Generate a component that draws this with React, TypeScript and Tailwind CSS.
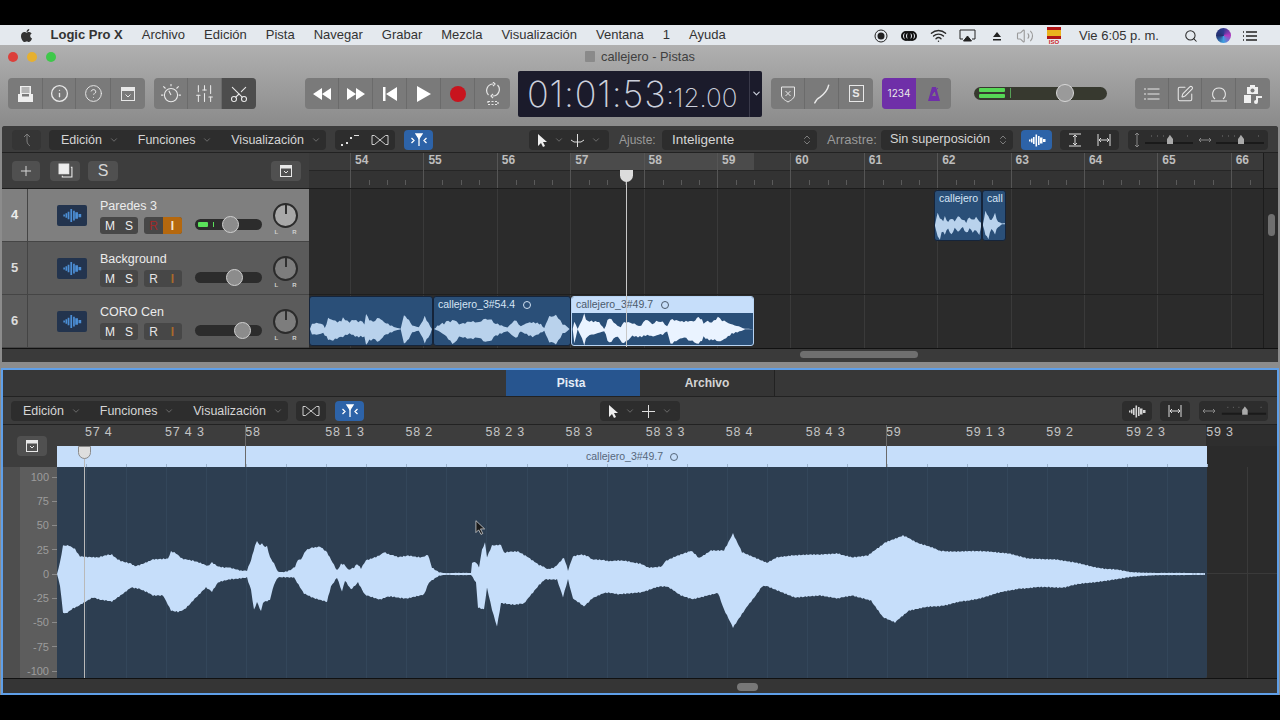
import { ChevronDown, ChevronsUpDown, CircleHelp, Info, Plus, Scissors, Search, SlidersVertical, SquarePen, Volume2, Wifi } from "lucide-react"
import { FaApple } from "react-icons/fa"
import type { ReactNode } from "react"

const sans = "font-['Liberation_Sans',Arial,sans-serif]"

const menus = ["Archivo", "Edición", "Pista", "Navegar", "Grabar", "Mezcla", "Visualización", "Ventana", "1", "Ayuda"]
const bars = [54, 55, 56, 57, 58, 59, 60, 61, 62, 63, 64, 65, 66]
const beats = ["57 4", "57 4 3", "58", "58 1 3", "58 2", "58 2 3", "58 3", "58 3 3", "58 4", "58 4 3", "59", "59 1 3", "59 2", "59 2 3"]
const amps = ["100", "75", "50", "25", "0", "-25", "-50", "-75", "-100"]
const divisions = Array.from({ length: 29 }, (_, i) => i)

// Envelope of the big waveform, traced in page coordinates.
const waveTop = [[57,574],[60,563],[63,546],[65,545],[69,546],[75,549],[80,556],[86,557],[98,558],[108,555],[112,554],[116,558],[124,562],[131,563],[135,566],[141,564],[153,559],[168,559],[171,552],[176,553],[182,558],[196,562],[208,566],[212,563],[218,567],[229,567],[241,571],[247,571],[251,560],[255,545],[257,541],[260,546],[262,543],[264,546],[267,546],[270,557],[274,563],[278,572],[284,572],[292,569],[295,567],[298,560],[301,560],[306,550],[312,547],[320,547],[327,552],[331,559],[337,570],[341,564],[344,564],[349,570],[354,568],[357,564],[361,569],[366,560],[376,557],[384,552],[390,555],[398,557],[408,556],[420,557],[428,555],[432,567],[439,572],[445,573],[471,573],[472,563],[476,562],[479,567],[482,550],[485,543],[487,557],[492,545],[501,545],[504,553],[518,551],[527,556],[539,565],[547,569],[555,567],[564,558],[568,570],[573,557],[580,555],[588,556],[592,560],[604,560],[612,561],[629,561],[640,564],[648,567],[662,567],[665,562],[675,557],[691,551],[699,558],[711,550],[724,550],[733,533],[742,552],[767,563],[777,557],[793,555],[820,555],[838,553],[852,558],[868,556],[885,542],[903,536],[917,542],[940,551],[967,551],[1009,553],[1028,558],[1056,559],[1089,566],[1130,572],[1160,573],[1205,573]]
const waveBottom = [[57,574],[60,585],[63,612],[66,613],[73,608],[84,603],[93,598],[100,600],[112,602],[122,595],[131,588],[139,588],[153,596],[163,596],[171,610],[178,612],[186,608],[196,597],[206,587],[212,591],[218,582],[235,579],[247,577],[251,590],[254,610],[257,602],[261,612],[263,602],[270,600],[274,585],[278,577],[294,577],[300,587],[304,593],[314,598],[327,602],[331,587],[337,578],[342,591],[345,580],[351,589],[358,582],[365,595],[380,599],[388,597],[408,598],[424,594],[429,583],[439,576],[445,575],[471,575],[476,583],[478,607],[484,609],[487,588],[492,610],[497,626],[501,603],[514,605],[524,604],[539,585],[545,579],[557,579],[563,597],[568,580],[573,598],[584,607],[592,598],[604,593],[618,594],[640,592],[660,587],[667,587],[681,595],[693,599],[718,593],[724,610],[733,628],[748,605],[762,587],[767,586],[795,597],[820,595],[838,599],[852,595],[871,600],[883,617],[895,623],[909,610],[938,606],[967,601],[1020,588],[1064,587],[1093,582],[1130,577],[1160,575],[1205,575]]

const r1Top = [[30,433],[36,412],[50,415],[70,420],[75,430],[85,400],[100,405],[120,410],[130,400],[150,410],[170,405],[195,415],[200,388],[215,410],[240,400],[255,410],[290,428],[305,432],[315,390],[325,400],[340,420],[360,428],[378,392],[395,425],[400,433]]
const r1Bottom = [[30,433],[36,455],[50,450],[70,445],[85,465],[100,470],[130,455],[150,450],[195,460],[200,480],[215,465],[240,470],[255,455],[290,438],[305,434],[315,478],[325,470],[340,445],[360,438],[378,478],[395,450],[400,433]]
const r2Top = [[405,433],[420,420],[435,415],[460,405],[480,415],[540,410],[565,400],[590,415],[625,428],[645,405],[665,425],[680,415],[720,415],[735,430],[750,392],[770,392],[790,415],[810,432]]
const r2Bottom = [[405,433],[430,445],[460,480],[480,460],[540,462],[565,475],[590,455],[625,440],[650,462],[665,440],[700,455],[735,438],[750,475],[770,478],[790,450],[810,434]]
const r3Top = [[820,433],[825,410],[835,433],[855,388],[865,410],[900,412],[915,433],[930,398],[950,420],[965,428],[975,410],[1000,415],[1020,425],[1040,405],[1060,415],[1085,408],[1105,425],[1115,405],[1150,412],[1185,410],[1200,395],[1215,412],[1240,410],[1258,398],[1290,415],[1340,432],[1362,433]]
const r3Bottom = [[820,433],[825,478],[835,434],[855,480],[865,455],[915,440],[930,478],[950,455],[975,478],[1000,455],[1040,455],[1085,452],[1105,440],[1115,478],[1150,458],[1200,480],[1215,460],[1260,472],[1300,450],[1340,434],[1362,434]]
const s1Top = [[30,118],[38,85],[45,100],[55,105],[60,95],[70,110],[80,98],[90,108],[100,92],[110,100],[125,110],[135,95],[145,105],[155,95],[165,108],[170,112]]
const s1Bottom = [[30,122],[38,150],[45,163],[50,140],[60,145],[70,130],[80,150],[90,128],[100,140],[115,125],[125,145],[135,130],[145,140],[155,135],[165,150],[170,125]]
const s2Top = [[172,115],[180,75],[190,95],[200,105],[212,85],[222,110],[235,114],[245,114]]
const s2Bottom = [[172,122],[180,150],[190,160],[200,130],[212,145],[222,125],[235,117],[245,117]]

// Adds a little fixed jitter so the edges look like audio, not a smooth outline.
function rough(pts: number[][], center: number, amp: number, step: number) {
  const out: number[][] = []
  for (let i = 0; i < pts.length - 1; i++) {
    const [x0, y0] = pts[i]
    const [x1, y1] = pts[i + 1]
    const n = Math.max(1, Math.round((x1 - x0) / step))
    for (let k = 0; k < n; k++) {
      const x = x0 + ((x1 - x0) * k) / n
      const y = y0 + ((y1 - y0) * k) / n
      const noise = Math.sin(x * 1.7) * 0.6 + Math.sin(x * 4.3 + 1) * 0.6
      const fade = Math.min(1, Math.abs(y - center) / (amp * 4))
      out.push([x, y + (y < center ? -1 : 1) * noise * amp * fade])
    }
  }
  out.push(pts[pts.length - 1])
  return out
}

function envelope(top: number[][], bottom: number[][], center: number, amp: number, step: number) {
  const pts = [...rough(top, center, amp, step), ...rough(bottom, center, amp, step).reverse()]
  return "M" + pts.map((p) => p[0].toFixed(1) + " " + p[1].toFixed(1)).join("L") + "Z"
}

function Seg({ children, className = "" }: { children: ReactNode; className?: string }) {
  return <div className={`flex h-[31px] items-stretch overflow-hidden rounded-[4px] bg-[#7a7a7a] ${className}`}>{children}</div>
}

function SegBtn({ children, className = "" }: { children: ReactNode; className?: string }) {
  return <div className={`flex items-center justify-center border-r border-[#6b6b6b] last:border-r-0 text-[#e8e8e8] ${className}`}>{children}</div>
}

function Dark({ children, className = "" }: { children: ReactNode; className?: string }) {
  return <div className={`flex h-[20px] items-center rounded-[4px] bg-[#2d2d2d] text-[#d5d5d5] ${className}`}>{children}</div>
}

function Chev() {
  return <ChevronDown size={10} strokeWidth={1.5} className="text-[#8f8f8f]" />
}

function MenuGroup({ w = "w-[277px]" }: { w?: string }) {
  return (
    <Dark className={`${w} justify-between pl-[12px] pr-[5px] text-[12.500px]`}>
      <span className="flex items-center gap-[7px]">Edición <Chev /></span>
      <span className="flex items-center gap-[7px]">Funciones <Chev /></span>
      <span className="flex items-center gap-[7px]">Visualización <Chev /></span>
    </Dark>
  )
}

function BowTie() {
  return (
    <svg width="20" height="14" viewBox="0 0 20 14" fill="none" stroke="#cfcfcf" strokeWidth="1">
      <path d="M2 2.500h2.500l11 9h2.500v-9h-2.500l-11 9h-2.500z" />
    </svg>
  )
}

function Snap() {
  return (
    <svg width="18" height="14" viewBox="0 0 18 14" fill="none" stroke="#fff" strokeWidth="1.300">
      <path d="M1.500 5l2.500 2.500l-2.500 2.500M16.500 5l-2.500 2.500l2.500 2.500M9 5v8" />
      <path d="M6 1h6l-3 4.500z" fill="#fff" />
    </svg>
  )
}

function WaveGlyph({ color = "#fff", w = 18 }: { color?: string; w?: number }) {
  return (
    <svg width={w} height="13" viewBox="0 0 18 12" fill={color}>
      <path d="M1 5h1.500v2h-1.500zM3 4h1.500v4h-1.500zM5 2.500h1.600v7h-1.600zM7.500 0h1.600v12h-1.600zM10 1.500h1.600v9h-1.600zM12 3h2.500v6h-2.500zM15 4.500h2.500v3h-2.500z" />
    </svg>
  )
}

function MiniSlider({ w = 52 }: { w?: number }) {
  return (
    <svg width={w} height="18" viewBox="0 0 52 18" fill="none">
      <path d="M2 12h48" stroke="#1a1a1a" strokeWidth="2" />
      <path d="M8 5h1M14 5h1M20 5h1M26 5h1M44 5h1" stroke="#777" />
      <path d="M24 13v-5l3-4l3 4v5z" fill="#aaa" />
    </svg>
  )
}

function CellLines({ cls, lead }: { cls: string; lead: string }) {
  return (
    <div className="absolute inset-0 flex">
      <div className={`h-full shrink-0 ${lead}`} />
      {bars.map((b) => (
        <div key={b} className={`h-full w-[73.4px] shrink-0 border-l ${cls}`} />
      ))}
    </div>
  )
}

function RulerCell({ bar }: { bar: number }) {
  return (
    <div className="flex h-full w-[73.4px] shrink-0 flex-col border-l border-[#555]">
      <div className="h-[17px] pl-[4px] text-[12px] font-bold leading-[15px] text-[#bdbdbd]">{bar}</div>
      <div className="flex flex-1 items-end pb-[3px]">
        <div className="h-[3px] w-1/4" />
        <div className="h-[5px] w-1/4 border-l border-[#5a5a5a]" />
        <div className="h-[5px] w-1/4 border-l border-[#5a5a5a]" />
        <div className="h-[5px] w-1/4 border-l border-[#5a5a5a]" />
      </div>
    </div>
  )
}

function TrackRow({ num, name, selected, fader, armed, meter }: { num: number; name: string; selected?: boolean; fader: string; armed?: boolean; meter?: boolean }) {
  const bg = selected ? "bg-[#7f7f7f]" : "bg-[#5b5b5b]"
  return (
    <div className={`flex h-[53px] border-b border-[#454545] ${bg}`}>
      <div className={`flex w-[26px] items-center justify-center border-r border-[#444] text-[13px] font-bold ${selected ? "text-[#ededed]" : "text-[#dcdcdc]"}`}>{num}</div>
      <div className="ml-[29px] mt-[16px] flex h-[21px] w-[30px] items-center justify-center rounded-[2px] bg-[#23344e]">
        <WaveGlyph color="#4c8fd6" w={22} />
      </div>
      <div className="ml-[13px] flex w-[86px] flex-col pt-[10px]">
        <div className="h-[14px] text-[12.500px] leading-[14px] text-[#ececec]">{name}</div>
        <div className="mt-[4px] flex gap-[6px]">
          <div className="flex h-[17px] w-[38px] items-center justify-around rounded-[3px] bg-[#474747] text-[12px] text-[#efefef]">
            <span>M</span><span>S</span>
          </div>
          <div className="flex h-[17px] w-[38px] items-stretch overflow-hidden rounded-[3px] bg-[#474747] text-[12px]">
            <span className={`flex w-1/2 items-center justify-center ${armed ? "text-[#a02a2a]" : "text-[#e4e4e4]"}`}>R</span>
            <span className={`flex w-1/2 items-center justify-center font-bold ${armed ? "bg-[#b5680e] text-[#f4e6d0]" : "text-[#a86a2c]"}`}>I</span>
          </div>
        </div>
      </div>
      <div className="relative ml-[9px] mt-[30px] h-[11px] w-[67px] rounded-full bg-[#2c2c2c]">
        {meter && <div className="absolute left-[3px] top-[3px] h-[5px] w-[10px] rounded-[1px] bg-[#5ae25a]" />}
        {meter && <div className="absolute left-[18px] top-[3px] h-[5px] w-[1px] bg-[#5ae25a]" />}
        <div className={`absolute -top-[3px] h-[17px] w-[17px] rounded-full border border-[#d0d0d0] bg-[#8c8c8c] ${fader}`} />
      </div>
      <div className="ml-[11px] mt-[14px] flex flex-col items-center">
        <div className={`relative h-[25px] w-[25px] rounded-full border-[2px] border-[#2b2b2b] ${selected ? "bg-[#a8a8a8]" : "bg-[#7d7d7d]"}`}>
          <div className="absolute left-[9.500px] top-0 h-[9px] w-[2px] bg-[#303030]" />
        </div>
        <div className="flex w-[22px] justify-between text-[6px] font-bold leading-[8px] text-[#d0d0d0]"><span>L</span><span>R</span></div>
      </div>
    </div>
  )
}

function Clip({ left, width, name, wave, view, selected, tag, bottom = "bottom-[2px]", top = "top-[1px]" }: { left: string; width: string; name: string; wave: string; view: string; selected?: boolean; tag?: boolean; bottom?: string; top?: string }) {
  return (
    <div className={`absolute ${top} ${bottom} overflow-hidden rounded-[3px] border bg-[#2a4f78] ${left} ${width} ${selected ? "border-[#b7d3f2]" : "border-[#15243a]"}`}>
      <svg className="absolute inset-0 h-full w-full" viewBox={view} preserveAspectRatio="none">
        <path d={wave} fill={selected ? "#eaf3ff" : "#b9d2ec"} />
      </svg>
      {name && (
        <div className={`absolute inset-x-0 top-0 flex h-[16px] items-center gap-[8px] pl-[4px] text-[10.500px] font-medium ${selected ? "bg-[#c6defa] text-[#4a5a6c]" : "text-[#d6e5f5]"}`}>
          <span>{name}</span>
          {tag && <span className={`h-[8px] w-[8px] rounded-full border ${selected ? "border-[#4a5a6c]" : "border-[#cfe0f2]"}`} />}
        </div>
      )}
    </div>
  )
}

function StatusIcons() {
  return (
    <div className="flex items-center text-[#2a2a2a]">
      <svg width="14" height="14" viewBox="0 0 14 14" className="ml-[874px]"><circle cx="7" cy="7" r="6" fill="none" stroke="#222" /><circle cx="7" cy="7" r="3.500" fill="#222" /></svg>
      <svg width="18" height="14" viewBox="0 0 18 14" className="ml-[12px]" fill="none" stroke="#111" strokeWidth="2"><circle cx="6" cy="7" r="4" /><circle cx="9" cy="7" r="4" /><circle cx="12" cy="7" r="4" /></svg>
      <Wifi size={17} strokeWidth={2} className="ml-[12px]" />
      <svg width="17" height="14" viewBox="0 0 17 14" className="ml-[12px]" fill="none" stroke="#222"><path d="M4 10h-3v-9h15v9h-3" /><path d="M8.500 7l4 5h-8z" fill="#222" /></svg>
      <svg width="10" height="10" viewBox="0 0 10 10" className="ml-[16px]"><path d="M5 1l4 5h-8zM1 8h8v1.500h-8z" fill="#222" /></svg>
      <Volume2 size={18} strokeWidth={1.500} className="ml-[14px] text-[#9a9a9a]" />
      <div className="ml-[13px] flex h-[18px] w-[14px] flex-col">
        <div className="h-[3px] bg-[#b01515]" />
        <div className="h-[6px] bg-[#e9b21d]" />
        <div className="h-[3px] bg-[#b01515]" />
        <div className="text-center text-[6px] font-bold leading-[6px] text-[#c22]">ISO</div>
      </div>
      <span className="ml-[18px] w-[85px] whitespace-nowrap text-[13px] text-[#333]">Vie 6:05 p. m.</span>
      <Search size={14} strokeWidth={1.800} className="ml-[20px]" />
      <div className="ml-[18px] h-[15px] w-[15px] rounded-full bg-[conic-gradient(#2f3a8f,#b23ac0,#3fa0e0,#23306f,#2f3a8f)]" />
      <svg width="16" height="12" viewBox="0 0 16 12" className="ml-[11px]" stroke="#222" strokeWidth="1.400"><path d="M4 2h11M4 6h11M4 10h11M1 2h1M1 6h1M1 10h1" /></svg>
    </div>
  )
}

export default function App() {
  return (
    <div className={`relative flex h-[720px] w-[1280px] flex-col overflow-hidden bg-black ${sans}`}>
      <div className="h-[25px] shrink-0 bg-black" />

      {/* Menu bar */}
      <div className="relative flex h-[20px] shrink-0 items-center gap-[19px] bg-[#e4e9ee] pl-[19px] text-[13px] text-[#333]">
        <FaApple size={15} className="-mr-[2.500px] text-[#333]" />
        <span className="font-bold">Logic Pro X</span>
        {menus.map((m) => (
          <span key={m}>{m}</span>
        ))}
        <div className="absolute left-0 top-[1px]"><StatusIcons /></div>
      </div>

      {/* Main window chrome */}
      <div className="flex h-[650px] shrink-0 flex-col bg-[linear-gradient(#b0b0b0,#8c8c8c_12%)]">
        <div className="relative flex h-[23px] shrink-0 items-center justify-center text-[12.800px] text-[#3f3f3f]">
          <div className="absolute left-[8px] top-[7px] flex gap-[9px]">
            <div className="h-[10px] w-[10px] rounded-full bg-[#dc3f3a]" />
            <div className="h-[10px] w-[10px] rounded-full bg-[#e6b030]" />
            <div className="h-[10px] w-[10px] rounded-full bg-[#3ec84a]" />
          </div>
          <div className="mr-[6px] h-[11px] w-[10px] rounded-[1px] bg-[#8a8a8a]" />
          callejero - Pistas
        </div>

        {/* Toolbar */}
        <div className="flex h-[58px] shrink-0 items-center pb-[7px]">
          <Seg className="ml-[8px] w-[137px]">
            <SegBtn className="w-[35px]">
              <svg width="17" height="18" viewBox="0 0 17 18" fill="#eee"><path d="M3 1h11v8h-11zM1 9h4v2.500h7v-2.500h4v8h-15z" /><path d="M4.500 3h8M4.500 5h8M4.500 7h8" stroke="#7a7a7a" /></svg>
            </SegBtn>
            <SegBtn className="w-[33px]"><Info size={19} strokeWidth={1.700} /></SegBtn>
            <SegBtn className="w-[35px]"><CircleHelp size={19} strokeWidth={1.200} /></SegBtn>
            <SegBtn className="flex-1">
              <svg width="16" height="16" viewBox="0 0 16 16" fill="none" stroke="#e8e8e8"><rect x="1.500" y="1.500" width="13" height="13" /><rect x="1.500" y="1.500" width="13" height="3" fill="#e8e8e8" /><path d="M5.500 8.500l2.500 2.500l2.500-2.500" /></svg>
            </SegBtn>
          </Seg>
          <Seg className="ml-[9px] w-[102px]">
            <SegBtn className="w-[34px]">
              <svg width="22" height="22" viewBox="0 0 20 20" fill="none" stroke="#e8e8e8"><circle cx="10" cy="11" r="6" /><path d="M10 11l-2-4M10 1v2M3 3l2 2M17 3l-2 2M1 11h2M17 11h2" /></svg>
            </SegBtn>
            <SegBtn className="w-[34px]"><SlidersVertical size={21} strokeWidth={1.200} /></SegBtn>
            <SegBtn className="flex-1 bg-[#4d4d4d]"><Scissors size={20} strokeWidth={1.300} className="-rotate-90" /></SegBtn>
          </Seg>
          <Seg className="ml-[49px] w-[205px]">
            <SegBtn className="w-[34px]"><svg width="20" height="12" viewBox="0 0 20 12" fill="#fff"><path d="M10 0v12l-9-6zM19 0v12l-9-6z" /></svg></SegBtn>
            <SegBtn className="w-[34px]"><svg width="20" height="12" viewBox="0 0 20 12" fill="#fff"><path d="M1 0v12l9-6zM10 0v12l9-6z" /></svg></SegBtn>
            <SegBtn className="w-[34px]"><svg width="16" height="14" viewBox="0 0 16 14" fill="#fff"><path d="M1 0h2.500v14h-2.500zM15 0v14l-11-7z" /></svg></SegBtn>
            <SegBtn className="w-[34px]"><svg width="14" height="16" viewBox="0 0 14 16" fill="#fff"><path d="M0 0v16l14-8z" /></svg></SegBtn>
            <SegBtn className="w-[34px]"><div className="h-[16px] w-[16px] rounded-full bg-[#c8141e]" /></SegBtn>
            <SegBtn className="flex-1">
              <svg width="18" height="24" viewBox="0 0 18 24" fill="none" stroke="#e6e6e6" strokeWidth="1.200"><path d="M9 2a6.500 6.500 0 0 0-4.500 11M9 14a6.500 6.500 0 0 0 4.500-11M9 0l2 2l-2 2M9 12l-2 2l2 2" /><path d="M4 19.500h10v3h-10z" strokeDasharray="2 1.500" /></svg>
            </SegBtn>
          </Seg>

          {/* Time display */}
          <div className="ml-[8px] flex h-[46px] w-[244px] items-center rounded-[2px] bg-[#1b1b2b] pl-[9px]">
            <div className="flex items-baseline font-['Inter',sans-serif] font-extralight text-[#ccd0dc]">
              <span className="text-[36px] tracking-[0.8px]">01:01:53</span>
              <span className="text-[26px]">:12.00</span>
            </div>
            <div className="ml-auto flex h-full w-[13px] items-center justify-center border-l border-[#3a3a4a]"><ChevronDown size={11} strokeWidth={2.500} className="text-[#ccd0dc]" /></div>
          </div>

          <Seg className="ml-[9px] w-[102px]">
            <SegBtn className="w-[34px]">
              <svg width="16" height="18" viewBox="0 0 16 18" fill="none" stroke="#e8e8e8"><path d="M1.500 2c4 0 9 0 13 0v8c0 3-3 5-6.500 7c-3.500-2-6.500-4-6.500-7z" /><path d="M5.500 6l5 5M10.500 6l-5 5" /></svg>
            </SegBtn>
            <SegBtn className="w-[34px]">
              <svg width="18" height="20" viewBox="0 0 16 18" fill="none" stroke="#e8e8e8" strokeWidth="1.300"><path d="M14 1c-1 5-4 8-8 11M1.500 17c1-2 2-4 4.500-5" strokeLinecap="round" /></svg>
            </SegBtn>
            <SegBtn className="flex-1">
              <div className="flex h-[17px] w-[15px] items-center justify-center border border-[#e8e8e8] text-[11px] font-bold">S</div>
            </SegBtn>
          </Seg>
          <Seg className="ml-[9px] w-[69px]">
            <SegBtn className="w-[34px] border-r-0 bg-[#6f2fa8] font-['Inter',sans-serif] text-[10px]">1234</SegBtn>
            <SegBtn className="flex-1">
              <svg width="14" height="16" viewBox="0 0 14 16" fill="#6f2fa8"><path d="M5 1h4l4 14h-12zM5 10h4l-1.500-5z" /><path d="M3 10l8-8" stroke="#6f2fa8" /></svg>
            </SegBtn>
          </Seg>

          {/* Master volume */}
          <div className="relative ml-[23px] h-[13px] w-[133px] rounded-full bg-[#37392f]">
            <div className="absolute left-[5px] top-[1px] h-[4px] w-[26px] rounded-[1px] bg-[#56d856]" />
            <div className="absolute left-[5px] top-[7px] h-[4px] w-[26px] rounded-[1px] bg-[#56d856]" />
            <div className="absolute left-[36px] top-[1px] h-[10px] w-[1px] bg-[#56a056]" />
            <div className="absolute -top-[3px] left-[82px] h-[18px] w-[18px] rounded-full border border-[#d8d8d8] bg-[#9a9a9a]" />
          </div>

          <Seg className="ml-[28px] w-[135px]">
            <SegBtn className="w-[34px]">
              <svg width="16" height="14" viewBox="0 0 16 14" stroke="#e8e8e8" strokeWidth="1.200"><path d="M3.500 2h12M3.500 7h12M3.500 12h12M0 2h2M0 7h2M0 12h2" /></svg>
            </SegBtn>
            <SegBtn className="w-[33px]"><SquarePen size={18} strokeWidth={1.400} /></SegBtn>
            <SegBtn className="w-[34px]">
              <svg width="18" height="18" viewBox="0 0 18 18" fill="none" stroke="#e8e8e8" strokeWidth="1.100"><path d="M5 14c-4-3-3-11 4-11s8 8 4 11" /><path d="M1 16h16" /></svg>
            </SegBtn>
            <SegBtn className="flex-1">
              <svg width="20" height="20" viewBox="0 0 20 20" fill="#f0f0f0"><path d="M7 1h5v2h-5zM4 3h11v7h-11zM1 11h7v8h-7zM13 12h6v2h-4v4a2 2 0 1 1-2-2z" /><circle cx="9.500" cy="6.500" r="2" fill="#7a7a7a" /></svg>
            </SegBtn>
          </Seg>
        </div>

        {/* Tracks area */}
        <div className="relative mx-[2px] flex h-[236px] shrink-0 flex-col overflow-hidden rounded-t-[3px] bg-[#3a3a3a]">
          <div className="flex h-[27px] shrink-0 items-center border-b border-[#222] bg-[#3c3c3c] pt-[2px] text-[12px]">
            <Dark className="ml-[10px] w-[29px] justify-center bg-[#353535]">
              <svg width="12" height="14" viewBox="0 0 12 14" fill="none" stroke="#7f7f7f"><path d="M3 4l3-3l3 3M6 1v7c0 3 2 4 3 5" /></svg>
            </Dark>
            <div className="ml-[8px]"><MenuGroup /></div>
            <Dark className="ml-[9px] w-[60px] justify-around">
              <svg width="20" height="12" viewBox="0 0 20 12" fill="#e0e0e0"><path d="M1 10h2v2h-2zM6 8h2v2h-2zM10 3h2v2h-2zM14 1h5v1h-5z" /></svg>
              <BowTie />
            </Dark>
            <Dark className="ml-[9px] w-[29px] justify-center bg-[#2d63a8]"><Snap /></Dark>
            <Dark className="ml-[96px] w-[80px] justify-around px-1">
              <svg width="10" height="13" viewBox="0 0 10 13" fill="#eee"><path d="M1 0v12l3-3l2 4l2-1l-2-4h4z" /></svg>
              <Chev />
              <svg width="13" height="13" viewBox="0 0 13 13" fill="none" stroke="#ddd"><path d="M6.500 0v13M0 6l3 2h7l3-2" /></svg>
              <Chev />
            </Dark>
            <span className="ml-[10px] w-[43px] text-[#9a9a9a]">Ajuste:</span>
            <Dark className="w-[155px] justify-between pl-[10px] pr-[4px] text-[13.500px]">
              Inteligente <ChevronsUpDown size={12} strokeWidth={1.500} className="text-[#9a9a9a]" />
            </Dark>
            <span className="ml-[10px] w-[54px] text-[13px] text-[#9a9a9a]">Arrastre:</span>
            <Dark className="w-[132px] justify-between pl-[9px] pr-[4px] text-[12.700px]">
              Sin superposición <ChevronsUpDown size={12} strokeWidth={1.500} className="text-[#9a9a9a]" />
            </Dark>
            <Dark className="ml-[8px] w-[31px] justify-center bg-[#2d63a8]"><WaveGlyph /></Dark>
            <Dark className="ml-[8px] w-[59px] justify-around">
              <svg width="14" height="14" viewBox="0 0 14 14" fill="none" stroke="#ddd"><path d="M1 1h12M1 13h12M7 2v10M5 4l2-2l2 2M5 10l2 2l2-2" /></svg>
              <svg width="14" height="14" viewBox="0 0 14 14" fill="none" stroke="#ddd"><path d="M1 1v12M13 1v12M2 7h10M4 5l-2 2l2 2M10 5l2 2l-2 2" /></svg>
            </Dark>
            <Dark className="ml-[9px] w-[140px] justify-between pl-[5px] pr-[2px]">
              <svg width="8" height="16" viewBox="0 0 8 16" fill="none" stroke="#888"><path d="M4 1v14M2 3l2-2l2 2M2 13l2 2l2-2" /></svg>
              <MiniSlider />
              <svg width="14" height="8" viewBox="0 0 14 8" fill="none" stroke="#888"><path d="M1 4h12M3 2l-2 2l2 2M11 2l2 2l-2 2" /></svg>
              <MiniSlider />
            </Dark>
          </div>

          <div className="flex h-[36px] shrink-0 border-b border-[#1c1c1c]">
            <div className="flex w-[307px] shrink-0 items-center bg-[#3d3d3d]">
              <Dark className="ml-[10px] w-[28px] justify-center bg-[#505050]"><Plus size={16} strokeWidth={1.500} /></Dark>
              <Dark className="ml-[10px] w-[30px] justify-center bg-[#505050]">
                <svg width="15" height="15" viewBox="0 0 14 14" fill="none" stroke="#eee"><rect x="1" y="1" width="9" height="9" fill="#eee" /><path d="M12 4h1v9h-9v-1" /></svg>
              </Dark>
              <Dark className="ml-[8px] w-[30px] justify-center bg-[#505050] text-[16px]">S</Dark>
              <Dark className="ml-[153px] w-[30px] justify-center bg-[#505050]">
                <svg width="12" height="12" viewBox="0 0 12 12" fill="none" stroke="#e8e8e8"><rect x=".5" y=".5" width="11" height="11" /><rect x=".5" y=".5" width="11" height="2.500" fill="#e8e8e8" /><path d="M4 6l2 2l2-2" /></svg>
              </Dark>
            </div>
            <div className="relative flex-1 overflow-hidden bg-[#333]">
              <div className="absolute inset-x-0 top-0 h-[17px] bg-[#3a3a3a]" />
              <div className="absolute left-[262px] top-0 h-[17px] w-[183px] bg-[#4b4b4b]" />
              <div className="absolute inset-x-0 top-[17px] h-[1px] bg-[#262626]" />
              <div className="relative flex h-full">
                <div className="h-full w-[41px] shrink-0" />
                {bars.map((b) => <RulerCell key={b} bar={b} />)}
              </div>
              <div className="absolute bottom-0 right-0 top-0 w-[15px] border-l border-[#1c1c1c] bg-[#333]" />
            </div>
          </div>

          <div className="flex h-[160px] shrink-0 border-b border-[#111]">
            <div className="w-[307px] shrink-0">
              <TrackRow num={4} name="Paredes 3" selected fader="left-[27px]" armed meter />
              <TrackRow num={5} name="Background" fader="left-[31px]" />
              <TrackRow num={6} name="CORO Cen" fader="left-[39px]" />
            </div>
            <div className="relative flex-1 bg-[#2b2b2b]">
              <CellLines cls="border-[#3a3a3a]" lead="w-[41px]" />
              <div className="absolute inset-x-0 top-[105px] h-[1px] bg-[#1f1f1f]" />
              <div className="absolute bottom-0 right-0 top-0 w-[15px] border-l border-[#1c1c1c] bg-[#2b2b2b]">
                <div className="ml-[4px] mt-[25px] h-[22px] w-[7px] rounded-full bg-[#6f6f6f]" />
              </div>
              <div className="absolute inset-x-0 bottom-0 top-[106px]">
                <Clip left="left-0" width="w-[124px]" name="" wave={envelope(r1Top, r1Bottom, 433, 4, 6)} view="30 333 370 150" />
                <Clip left="left-[124px]" width="w-[138px]" name="callejero_3#54.4" tag wave={envelope(r2Top, r2Bottom, 433, 4, 6)} view="405 333 407 150" />
                <Clip left="left-[262px]" width="w-[183px]" name="callejero_3#49.7" tag selected wave={envelope(r3Top, r3Bottom, 433, 4, 6)} view="818 333 546 150" />
              </div>
              <div className="absolute inset-x-0 top-0 h-[52px]">
                <Clip left="left-[625px]" width="w-[48px]" top="top-[1px]" bottom="bottom-0" name="callejero" wave={envelope(s1Top, s1Bottom, 120, 3, 5)} view="30 15 140 150" />
                <Clip left="left-[673px]" width="w-[24px]" top="top-[1px]" bottom="bottom-0" name="call" wave={envelope(s2Top, s2Bottom, 116, 3, 5)} view="172 15 73 150" />
              </div>
            </div>
          </div>

          <div className="relative h-[13px] shrink-0 bg-[#3a3a3a]">
            <div className="absolute left-[798px] top-[2px] h-[7px] w-[118px] rounded-full bg-[#6f6f6f]" />
          </div>
        </div>

        <div className="h-[6px] shrink-0" />

        {/* Editor */}
        <div className="mx-[1px] flex flex-1 flex-col overflow-hidden border-2 border-[#5f9fe8] bg-[#3a3a3a]">
          <div className="flex h-[27px] shrink-0 border-b border-[#222] bg-[#373737] text-[12px] font-bold">
            <div className="ml-[503px] flex w-[134px] items-center justify-center bg-[#27558f] pr-[4px] text-[#e4ecf6]">Pista</div>
            <div className="flex w-[135px] items-center justify-center border-r border-[#222] bg-[#343434] text-[#d4d4d4]">Archivo</div>
          </div>
          <div className="flex h-[28px] shrink-0 items-center border-b border-[#222] bg-[#3c3c3c] pt-[1px] text-[12px]">
            <div className="ml-[8px]"><MenuGroup w="w-[277px]" /></div>
            <Dark className="ml-[8px] w-[30px] justify-center"><BowTie /></Dark>
            <Dark className="ml-[9px] w-[29px] justify-center bg-[#2d63a8]"><Snap /></Dark>
            <Dark className="ml-[236px] w-[80px] justify-around px-1">
              <svg width="10" height="13" viewBox="0 0 10 13" fill="#eee"><path d="M1 0v12l3-3l2 4l2-1l-2-4h4z" /></svg>
              <Chev />
              <svg width="13" height="13" viewBox="0 0 13 13" stroke="#ddd"><path d="M6.500 0v13M0 6.500h13" /></svg>
              <Chev />
            </Dark>
            <Dark className="ml-[442px] w-[30px] justify-center"><WaveGlyph color="#d5d5d5" /></Dark>
            <Dark className="ml-[8px] w-[30px] justify-center">
              <svg width="14" height="14" viewBox="0 0 14 14" fill="none" stroke="#ddd"><path d="M1 1v12M13 1v12M2 7h10M4 5l-2 2l2 2M10 5l2 2l-2 2" /></svg>
            </Dark>
            <Dark className="ml-[9px] w-[69px] justify-between pl-[3px]">
              <svg width="14" height="8" viewBox="0 0 14 8" fill="none" stroke="#888"><path d="M1 4h12M3 2l-2 2l2 2M11 2l2 2l-2 2" /></svg>
              <MiniSlider w={48} />
            </Dark>
          </div>

          <div className="flex h-[253px] shrink-0">
            {/* Amplitude column */}
            <div className="flex w-[54px] shrink-0 flex-col">
              <div className="flex h-[42px] shrink-0 items-center justify-center bg-[#3d3d3d] pl-[4px]">
                <Dark className="w-[30px] justify-center bg-[#505050]">
                  <svg width="12" height="12" viewBox="0 0 12 12" fill="none" stroke="#e8e8e8"><rect x=".5" y=".5" width="11" height="11" /><rect x=".5" y=".5" width="11" height="2.500" fill="#e8e8e8" /><path d="M4 6l2 2l2-2" /></svg>
                </Dark>
              </div>
              <div className="flex flex-1">
                <div className="w-[17px] bg-[#4e4e4e]" />
                <div className="flex flex-1 flex-col justify-between bg-[#5d5d5d] pt-[3px]">
                  {amps.map((a) => (
                    <div key={a} className="flex h-[14px] items-center justify-end text-[11px] text-[#9c9c9c]">
                      {a}<div className="ml-[3px] h-[1px] w-[5px] bg-[#8a8a8a]" />
                    </div>
                  ))}
                </div>
              </div>
            </div>

            <div className="relative flex flex-1 flex-col overflow-hidden">
              <div className="flex h-[21px] shrink-0 bg-[#3d3d3d] pl-[28px] text-[12.500px] text-[#c4c4c4]">
                {beats.map((b) => (
                  <div key={b} className="w-[80.100px] shrink-0 whitespace-pre leading-[15px] tracking-[0.8px]">{b}</div>
                ))}
                <div className="-mr-[200px] flex-1 bg-[#2e2e2e] leading-[15px] tracking-[0.8px]">59 3</div>
              </div>
              <div className="flex h-[21px] shrink-0">
                <div className="relative flex w-[1150px] shrink-0 items-center justify-center gap-[7px] bg-[#c6defa] text-[10.500px] text-[#56677a]">
                  callejero_3#49.7 <span className="h-[8px] w-[8px] rounded-full border border-[#56677a]" />
                  <div className="absolute inset-x-0 bottom-0 flex pl-[29px]">
                    {divisions.map((d) => (
                      <div key={d} className="h-[3px] w-[40.050px] shrink-0 border-l border-[#9fb6d0]" />
                    ))}
                  </div>
                </div>
                <div className="flex-1 bg-[#2b2b2b]" />
              </div>
              <div className="flex flex-1">
                <div className="relative w-[1150px] shrink-0 overflow-hidden rounded-br-[3px] bg-[#2d3e51]">
                  <div className="absolute inset-0 flex pl-[29px]">
                    {divisions.map((d) => (
                      <div key={d} className="h-full w-[40.050px] shrink-0 border-l border-[#33465a]" />
                    ))}
                  </div>
                  <svg className="absolute inset-0 h-full w-full" viewBox="57 467 1150 211">
                    <path d={envelope(waveTop, waveBottom, 574, 0.9, 1.5)} fill="#c6defa" />
                  </svg>
                </div>
                <div className="relative flex-1 bg-[#2b2b2b]">
                  <div className="absolute inset-x-0 top-[106px] h-[1px] bg-[#3a3a3a]" />
                  <div className="absolute bottom-0 left-[40px] top-0 w-[1px] bg-[#3a3a3a]" />
                </div>
              </div>
              {/* Playhead */}
              <div className="absolute bottom-0 left-[27px] top-[21px] w-[1px] bg-[#b9b9b9]" />
              <div className="absolute left-[21px] top-[21px] h-[13px] w-[13px] rounded-b-full border border-[#8a8a8a] bg-[#dedede]" />
              <div className="absolute left-[188px] top-[0px] h-[42px] w-[1px] bg-[#6a6a6a]" />
              <div className="absolute left-[829px] top-[0px] h-[42px] w-[1px] bg-[#6a6a6a]" />
              {/* Mouse pointer */}
              <svg className="absolute left-[418px] top-[94px]" width="11" height="18" viewBox="0 0 12 18" fill="#1a1a1a" stroke="#ddd" strokeWidth=".8">
                <path d="M1 1v13l3-3l2.500 5l2-1l-2.500-5h4.500z" />
              </svg>
            </div>
          </div>

          <div className="relative flex-1 border-t border-[#111] bg-[#353535]">
            <div className="absolute left-[734px] top-[4px] h-[8px] w-[21px] rounded-full bg-[#777]" />
          </div>
        </div>
      </div>

      {/* Playhead of the tracks area sits over the ruler and lanes */}
      <div className="absolute left-[626px] top-[172px] h-[175px] w-[1px] bg-[#c8c8c8]" />
      <div className="absolute left-[620px] top-[170px] h-[12px] w-[13px] rounded-b-full bg-[#dcdcdc]" />
    </div>
  )
}
